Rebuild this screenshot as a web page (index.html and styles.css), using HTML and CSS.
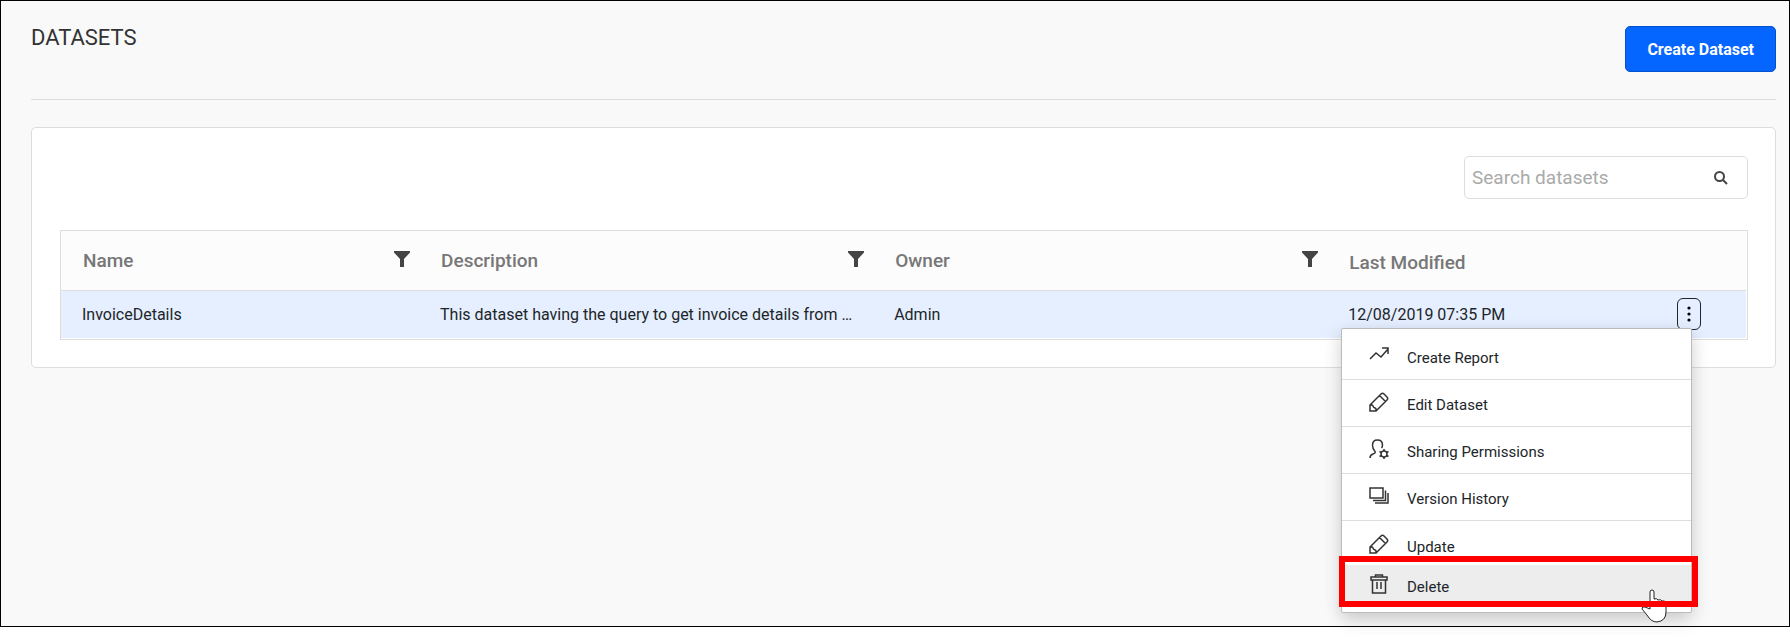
FILE: index.html
```html
<!DOCTYPE html>
<html lang="en">
<head>
<meta charset="utf-8">
<title>Datasets</title>
<link rel="stylesheet" href="styles.css">
</head>
<body>
<svg class="sprite" aria-hidden="true">
  <symbol id="filter" viewBox="0 0 16 16"><path d="M0 0h16v1.500L10 8v8H6V8L0 1.500z" fill="currentColor"/></symbol>
  <symbol id="pencil" viewBox="0 0 20 20"><path d="M1 19v-6L12 2q1.500-1.500 3 0l3 3q1.500 1.500 0 3L7 19zM1 13q2.500-.5 3 1 .3 1.500 2 2 1.500.5 1 3M10.500 3.500l6 6"/></symbol>
</svg>
<div class="page">
  <header class="page-header">
    <h1 class="page-title">DATASETS</h1>
    <button class="create-button" type="button">Create Dataset</button>
  </header>
  <main class="card">
    <form class="search" role="search">
      <input class="search-input" type="text" placeholder="Search datasets" aria-label="Search datasets">
      <button class="search-button" type="button" aria-label="Search"><svg class="search-icon" viewBox="0 0 14 14"><circle cx="5.500" cy="5.500" r="4.500"/><path d="M9 9l4 4"/></svg></button>
    </form>
    <div class="grid">
      <table class="table">
        <colgroup><col class="col-name"><col class="col-wide"><col class="col-wide"><col class="col-date"></colgroup>
        <thead>
          <tr>
            <th scope="col"><div class="head">Name <button class="filter" type="button" aria-label="Filter name"><svg><use href="#filter"/></svg></button></div></th>
            <th scope="col"><div class="head">Description <button class="filter" type="button" aria-label="Filter description"><svg><use href="#filter"/></svg></button></div></th>
            <th scope="col"><div class="head">Owner <button class="filter" type="button" aria-label="Filter owner"><svg><use href="#filter"/></svg></button></div></th>
            <th scope="col"><div class="head head-plain">Last Modified</div></th>
          </tr>
        </thead>
        <tbody>
          <tr>
            <td>InvoiceDetails</td>
            <td>This dataset having the query to get invoice details from …</td>
            <td>Admin</td>
            <td>
              <div class="date-cell">
                <span>12/08/2019 07:35 PM</span>
                <div class="actions">
                  <button class="more" type="button" aria-label="More actions"><svg viewBox="0 0 4 16"><circle cx="2" cy="2" r="1.600"/><circle cx="2" cy="8" r="1.600"/><circle cx="2" cy="14" r="1.600"/></svg></button>
                  <div class="menu" role="menu">
                    <button class="item" type="button" role="menuitem"><svg class="icon" viewBox="0 0 20 20"><path d="M1 14l6-6 5 4 7-8M13 3h6v6"/></svg><span>Create Report</span></button>
                    <button class="item" type="button" role="menuitem"><svg class="icon"><use href="#pencil"/></svg><span>Edit Dataset</span></button>
                    <button class="item" type="button" role="menuitem"><svg class="icon" viewBox="0 0 20 20"><path d="M1 19q0-3 3-4 3-1 2-2.500Q3.500 10 3.500 6q0-5 5-5t5 5q0 2-1 3"/><circle cx="15" cy="15" r="3"/><path d="M15 10v2M15 18v2M10.500 12.500l2 1M17.500 16.500l2 1M10.500 17.500l2-1M17.500 13.500l2-1"/></svg><span>Sharing Permissions</span></button>
                    <button class="item" type="button" role="menuitem"><svg class="icon" viewBox="0 0 20 20"><path d="M1 2h13v10H1zM16.500 4.500v10H4M19 7v10H6"/></svg><span>Version History</span></button>
                    <button class="item item-short" type="button" role="menuitem"><svg class="icon"><use href="#pencil"/></svg><span>Update</span></button>
                    <button class="item item-active" type="button" role="menuitem"><svg class="icon" viewBox="0 0 20 20"><path d="M2 3h16v3H2zM6.500 3V1h7v2M3.500 6v13h13V6M8 8v7M12 8v7"/></svg><span>Delete</span></button>
                    <svg class="cursor" viewBox="0 0 26 34"><path d="M9 20V3q0-2 2-2t2 2v7q3-1 4 1 3-1 4 1 3-1 4 2v9q0 9-9 10-6 0-10-7L1 20q0-3 3-2z"/></svg>
                    <div class="highlight"></div>
                  </div>
                </div>
              </div>
            </td>
          </tr>
        </tbody>
      </table>
    </div>
  </main>
</div>
</body>
</html>
```
FILE: styles.css
```css
* { box-sizing: border-box; }
body {
  margin: 0;
  min-height: 100vh;
  padding-bottom: 12px;
  display: flex;
  background: #fff;
  color: #212529;
  font-family: Roboto, sans-serif;
  font-size: 16px;
}
button, input { font: inherit; color: inherit; background: none; border: 0; padding: 0; margin: 0; }
.sprite { position: absolute; width: 0; height: 0; }
.page {
  flex: 1;
  border: 1px solid #000;
  background: #f9f9f9;
  padding: 25px 13px 24px 30px;
}
.page-header {
  display: flex;
  justify-content: space-between;
  align-items: flex-start;
  height: 74px;
  border-bottom: 1px solid #ddd;
}
.page-title { margin: 0; font-size: 22px; line-height: 24px; font-weight: 400; color: #333; }
.create-button {
  height: 46px;
  padding: 0 21px;
  border: 1px solid #0052cc;
  border-radius: 5px;
  background: #0565ff;
  color: #fff;
  font-weight: 700;
}
.card {
  margin-top: 27px;
  padding: 28px 27px 27px 28px;
  border: 1px solid #ddd;
  border-radius: 5px;
  background: #fff;
}
.search {
  display: flex;
  align-items: center;
  width: 284px;
  height: 43px;
  margin: 0 0 31px auto;
  border: 1px solid #ddd;
  border-radius: 5px;
}
.search-input { flex: 1; min-width: 0; padding-left: 7px; font-size: 19px; outline: 0; }
.search-input::placeholder { color: #aaa; }
.search-button { margin-right: 19px; display: flex; }
.search-icon { width: 14px; height: 14px; fill: none; stroke: #444; stroke-width: 2; }
.grid { border: 1px solid #ddd; padding: 0 1px 1px 0; }
.table { width: 100%; table-layout: fixed; border-collapse: separate; border-spacing: 0; }
.col-name { width: 21.25%; }
.col-wide { width: 26.95%; }
.col-date { width: 24.85%; }
th { height: 60px; padding: 0 9px 1px 22px; background: #fcfcfc; border-bottom: 1px solid #ddd; text-align: left; font-size: 19px; font-weight: 500; color: #777; }
.head { display: flex; justify-content: space-between; align-items: center; }
.head-plain { padding-top: 5px; }
.filter { display: flex; width: 16px; height: 18px; color: #444; }
.filter svg { width: 16px; height: 16px; }
td { height: 47px; padding: 0 0 1px 21px; background: #e5efff; white-space: nowrap; }
.date-cell { display: flex; justify-content: space-between; align-items: center; }
.actions { position: relative; margin-right: 45px; }
.more { display: flex; align-items: center; justify-content: center; width: 24px; height: 32px; border: 1px solid #212529; border-radius: 6px; }
.more svg { width: 4px; height: 16px; }
.menu {
  position: absolute;
  z-index: 1;
  top: 30px;
  right: 9px;
  width: 351px;
  padding: 4px 0 5px;
  border: 1px solid #bbb;
  border-radius: 2px;
  background: #fff;
  box-shadow: 0 6px 18px rgba(0, 0, 0, .2);
}
.item { display: flex; align-items: center; gap: 18px; width: 100%; height: 47px; padding: 0 0 2px 27px; border-bottom: 1px solid #ddd; text-align: left; font-size: 15px; }
.item span { padding-top: 6px; }
.item-short { height: 44px; padding: 2px 0 0 27px; border: 0; }
.item-active { height: 42px; padding-bottom: 4px; border: 0; background: #ededed; }
.icon { width: 20px; height: 20px; fill: none; stroke: #333; stroke-width: 1.500; }
.highlight { position: absolute; left: -3px; right: -7px; bottom: 5px; height: 51px; border: 6px solid #f00; }
.cursor { position: absolute; right: 24px; bottom: -11px; width: 26px; height: 34px; fill: #fff; stroke: #222; }
```
